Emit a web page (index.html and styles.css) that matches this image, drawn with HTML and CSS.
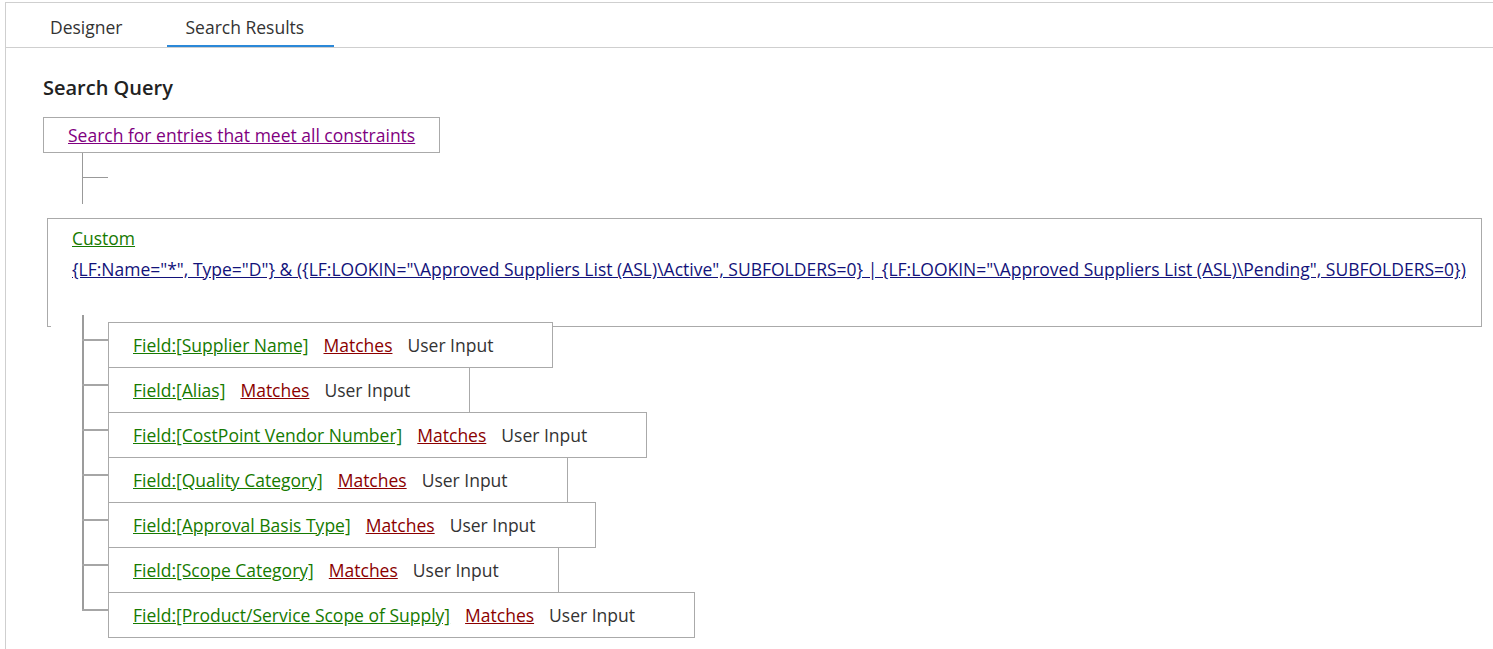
FILE: index.html
```html
<!DOCTYPE html>
<html>
<head>
<meta charset="utf-8">
<link rel="stylesheet" href="styles.css">
</head>
<body>
<div class="frame">
  <div class="tabs">
    <div class="tab">Designer</div>
    <div class="tab active">Search Results</div>
  </div>
  <div class="content">
    <h2 class="title">Search Query</h2>
    <div class="root-box"><a class="lnk purple" href="#">Search for entries that meet all constraints</a></div>
    <div class="stub"></div>
    <div class="custom-box">
      <div class="line1"><a class="lnk green" href="#">Custom</a></div>
      <div class="line2"><a class="lnk navy" href="#">{LF:Name="*", Type="D"} &amp; ({LF:LOOKIN="\Approved Suppliers List (ASL)\Active", SUBFOLDERS=0} | {LF:LOOKIN="\Approved Suppliers List (ASL)\Pending", SUBFOLDERS=0})</a></div>
    </div>
    <div class="children">
      <div class="row first"><div class="field-box"><a class="lnk green" href="#">Field:[Supplier Name]</a><a class="lnk red" href="#">Matches</a><span class="val">User Input</span></div></div>
      <div class="row"><div class="field-box"><a class="lnk green" href="#">Field:[Alias]</a><a class="lnk red" href="#">Matches</a><span class="val">User Input</span></div></div>
      <div class="row"><div class="field-box"><a class="lnk green" href="#">Field:[CostPoint Vendor Number]</a><a class="lnk red" href="#">Matches</a><span class="val">User Input</span></div></div>
      <div class="row"><div class="field-box"><a class="lnk green" href="#">Field:[Quality Category]</a><a class="lnk red" href="#">Matches</a><span class="val">User Input</span></div></div>
      <div class="row"><div class="field-box"><a class="lnk green" href="#">Field:[Approval Basis Type]</a><a class="lnk red" href="#">Matches</a><span class="val">User Input</span></div></div>
      <div class="row"><div class="field-box"><a class="lnk green" href="#">Field:[Scope Category]</a><a class="lnk red" href="#">Matches</a><span class="val">User Input</span></div></div>
      <div class="row last"><div class="field-box"><a class="lnk green" href="#">Field:[Product/Service Scope of Supply]</a><a class="lnk red" href="#">Matches</a><span class="val">User Input</span></div></div>
    </div>
  </div>
</div>
</body>
</html>
```
FILE: styles.css
```css
html, body {
  margin: 0;
  padding: 0;
  background: #fff;
}
body {
  font-family: "Open Sans", "Noto Sans", sans-serif;
  color: #333;
  overflow: hidden;
}
.frame {
  margin: 2px 0 0 5px;
  border-top: 1px solid #cfcfcf;
  border-left: 1px solid #cfcfcf;
  min-height: 660px;
}
.tabs {
  display: flex;
  height: 44px;
  border-bottom: 1px solid #cfcfcf;
  padding-left: 25px;
  gap: 25px;
}
.tab {
  padding: 4px 19px 0 19px;
  font-size: 17.5px;
  line-height: 40px;
  color: #333;
  box-sizing: border-box;
  height: 44px;
  white-space: nowrap;
}
.tab.active {
  border-bottom: 2px solid #2b88d8;
  width: 167px;
}
.content {
  padding-left: 37px;
}
.title {
  margin: 28px 0 17px 0;
  font-size: 20px;
  line-height: 24px;
  font-weight: 600;
  color: #222;
}
.lnk {
  text-decoration: underline;
}
.purple { color: #800080; }
.green { color: #167a00; }
.navy { color: #12127a; }
.red { color: #8b0000; }
.root-box {
  display: inline-block;
  border: 1px solid #aaa;
  padding: 0 24px;
  line-height: 34px;
  font-size: 17.5px;
  vertical-align: top;
}
.stub {
  position: relative;
  height: 51px;
  margin-left: 39px;
  border-left: 1px solid #999;
}
.stub::after {
  content: "";
  position: absolute;
  left: 0;
  top: 24px;
  width: 25px;
  border-top: 1px solid #999;
}
.custom-box {
  margin: 14px 11px 0 4px;
  border: 1px solid #aaa;
  padding: 7px 24px 45px 24px;
  font-size: 17.5px;
}
.line1, .line2 {
  line-height: 24px;
  white-space: nowrap;
}
.line2 {
  margin-top: 7px;
}
.children {
  margin: -12px 0 0 8px;
}
.row {
  position: relative;
  display: flex;
  width: fit-content;
  background: #fff;
  padding-left: 57px;
  margin-top: -1px;
}
.row.first {
  margin-top: 0;
  padding-top: 7px;
}
.row::before {
  content: "";
  position: absolute;
  left: 31px;
  top: 0;
  bottom: 0;
  border-left: 2px solid #9c9c9c;
}
.row.last::before {
  bottom: auto;
  height: 18px;
}
.row::after {
  content: "";
  position: absolute;
  left: 31px;
  width: 26px;
  top: 17px;
  border-top: 2px solid #a6a6a6;
}
.row.first::after {
  top: 24px;
}
.field-box {
  display: flex;
  gap: 15px;
  border: 1px solid #aaa;
  padding: 0 59px 0 24px;
  line-height: 44px;
  font-size: 17.5px;
  white-space: nowrap;
}
.val {
  color: #333;
}
```
